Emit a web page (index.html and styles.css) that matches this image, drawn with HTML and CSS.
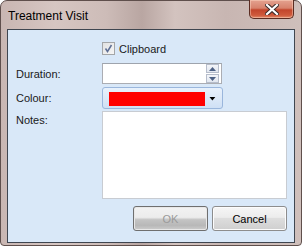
FILE: index.html
```html
<!DOCTYPE html>
<html lang="en">
<head>
  <meta charset="UTF-8">
  <title>Treatment Visit</title>
  <link rel="stylesheet" href="styles.css">
</head>
<body>
  <div class="window">
    <div class="titlebar">
      <span class="title">Treatment Visit</span>
      <button class="close" aria-label="Close">
        <svg width="14" height="11" viewBox="0 0 14 11">
          <path d="M2 1 L12 10 M12 1 L2 10" stroke="#3b2a28" stroke-width="4.2" stroke-linecap="square"/>
          <path d="M2 1 L12 10 M12 1 L2 10" stroke="#ffffff" stroke-width="2.2" stroke-linecap="square"/>
        </svg>
      </button>
    </div>

    <div class="client">
      <div class="row check-row">
        <span class="label"></span>
        <label class="check">
          <span class="box">
            <svg width="9" height="9" viewBox="0 0 9 9">
              <path d="M1.5 4.5 L3.5 7.5 L7.5 1" fill="none" stroke="#5e6f95" stroke-width="1.5"/>
            </svg>
          </span>
          Clipboard
        </label>
      </div>

      <div class="row">
        <span class="label">Duration:</span>
        <div class="spin">
          <div class="spin-input"></div>
          <div class="spin-buttons">
            <span class="spin-btn"><svg width="7" height="4" viewBox="0 0 7 4"><path d="M0 4 L3.5 0 L7 4 Z" fill="#4d6185"/></svg></span>
            <span class="spin-btn"><svg width="7" height="4" viewBox="0 0 7 4"><path d="M0 0 L3.5 4 L7 0 Z" fill="#4d6185"/></svg></span>
          </div>
        </div>
      </div>

      <div class="row colour-row">
        <span class="label">Colour:</span>
        <div class="combo">
          <span class="swatch" style="background: #ff0000;"></span>
          <svg class="arrow" width="7" height="4" viewBox="0 0 7 4"><path d="M0.5 0 L6.5 0 L3.5 3.5 Z" fill="#000"/></svg>
        </div>
      </div>

      <div class="row notes-row">
        <span class="label">Notes:</span>
        <div class="notes"></div>
      </div>

      <div class="buttons">
        <button class="btn btn-ok" disabled>OK</button>
        <button class="btn">Cancel</button>
      </div>
    </div>
  </div>
</body>
</html>
```

FILE: styles.css
```css
html, body {
  margin: 0;
  padding: 0;
  width: 303px;
  height: 246px;
  overflow: hidden;
  background: #ffffff;
}

body {
  font-family: 'Liberation Sans', Arial, sans-serif;
  font-size: 11px;
  color: #1a1a1a;
}

.window {
  width: 302px;
  height: 246px;
  box-sizing: border-box;
  border: 1px solid #5f4f4c;
  border-radius: 7px 7px 4px 4px;
  background: linear-gradient(90deg, #c9b6b2 0%, #d6c6c2 18%, #cdbcb8 35%, #b9a6a2 47%, #d3c3bf 58%, #c8b6b2 75%, #cfbfbb 100%);
  display: flex;
  flex-direction: column;
  padding: 0 6px 2px 6px;
}

.titlebar {
  height: 28px;
  display: flex;
  align-items: flex-start;
  justify-content: space-between;
  flex-shrink: 0;
}

.title {
  font-family: 'Liberation Sans', Arial, sans-serif;
  font-size: 12px;
  color: #000000;
  margin: 8px 0 0 1px;
}

.close {
  width: 45px;
  height: 19px;
  margin: -1px 1px 0 0;
  padding: 0;
  border: 1px solid #5b2c22;
  border-top: none;
  border-radius: 0 0 5px 5px;
  background: linear-gradient(180deg, #e4a290 0%, #d7826c 45%, #c2452c 55%, #cf5a3c 85%, #e08a6c 100%);
  display: flex;
  align-items: center;
  justify-content: center;
  box-shadow: inset 0 0 0 1px rgba(255, 220, 200, 0.45);
}

.client {
  flex: 1;
  border: 1px solid #3f4650;
  background: #d9e8f8;
  padding: 12px 7px 0 8px;
  display: flex;
  flex-direction: column;
}

.row {
  display: grid;
  grid-template-columns: 86px 1fr;
  align-items: center;
  margin-bottom: 3px;
}

.check-row {
  margin-bottom: 8px;
}

.colour-row {
  margin-bottom: 2px;
}

.check {
  display: flex;
  align-items: center;
  gap: 4px;
  font-size: 11px;
}

.box {
  width: 11px;
  height: 11px;
  border: 1px solid #a4a6a8;
  background: linear-gradient(135deg, #e2e2e2, #f6f6f6);
  display: flex;
  align-items: center;
  justify-content: center;
}

.spin {
  width: 120px;
  height: 21px;
  box-sizing: border-box;
  border: 1px solid #abadb3;
  border-top-color: #9ea4ad;
  background: #ffffff;
  display: flex;
  align-items: center;
  padding: 1px 2px 1px 0;
}

.spin-input {
  flex: 1;
}

.spin-buttons {
  display: flex;
  flex-direction: column;
  gap: 1px;
}

.spin-btn {
  width: 11px;
  height: 7px;
  border: 1px solid #b6bdcb;
  background: linear-gradient(180deg, #f3f5f9, #e2e7f0);
  display: flex;
  align-items: center;
  justify-content: center;
}

.combo {
  width: 121px;
  height: 22px;
  box-sizing: border-box;
  border: 1px solid #9ab6dc;
  border-radius: 3px;
  background: linear-gradient(180deg, #e8f1fc 0%, #dde9f8 50%, #cfe0f5 100%);
  display: flex;
  align-items: center;
  padding: 0 6px;
}

.swatch {
  width: 99px;
  height: 14px;
  margin-top: 1px;
}

.arrow {
  margin-left: 4px;
  margin-top: 2px;
}

.notes-row {
  align-items: start;
  margin-bottom: 0;
}

.notes-row .label {
  padding-top: 3px;
}

.notes {
  height: 86px;
  border: 1px solid #c8ccd2;
  background: #ffffff;
}

.buttons {
  display: flex;
  justify-content: flex-end;
  gap: 4px;
  margin-top: 7px;
}

.btn {
  width: 75px;
  height: 25px;
  font-family: 'Liberation Sans', Arial, sans-serif;
  font-size: 11px;
  color: #000000;
  border: 1px solid #8d8d8d;
  border-radius: 3px;
  background: linear-gradient(180deg, #f6f6f6 0%, #ececec 45%, #dddddd 50%, #cfcfcf 100%);
  box-shadow: inset 0 0 0 1px #fcfcfc;
  padding: 0;
}

.btn-ok {
  color: #9a9a9a;
  border-color: #6f6f6f;
  background: linear-gradient(180deg, #f2f2f2 0%, #ececec 45%, #c4c4c4 55%, #b8b8b8 80%, #cdcdcd 100%);
  box-shadow: inset 0 0 0 1px #e8e8e8;
}
```
